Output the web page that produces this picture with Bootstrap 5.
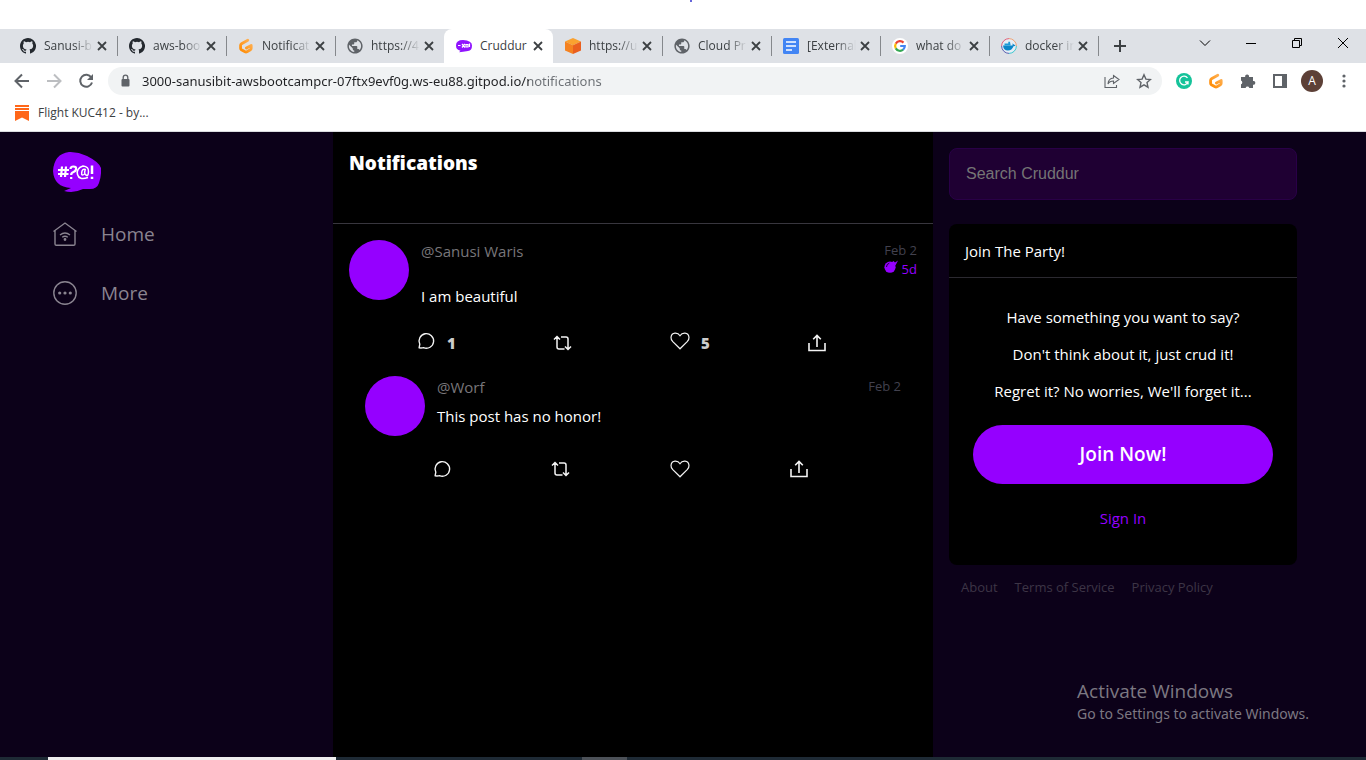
<!DOCTYPE html>
<html lang="en">
<head>
<meta charset="utf-8">
<meta name="viewport" content="width=device-width, initial-scale=1">
<title>Cruddur</title>
<link href="https://cdn.jsdelivr.net/npm/bootstrap@5.3.0/dist/css/bootstrap.min.css" rel="stylesheet">
<style>
  :root { --purple: #9500ff; --night: #0c0119; }
  body { font-family: "Open Sans", "Noto Sans", sans-serif; font-size: 15px; line-height: 24px; background: #fff; color: #fff; overflow-x: hidden; }
  svg { display: block; flex: none; }
  button { background: none; border: 0; padding: 0; color: inherit; }

  /* browser window */
  .page-top { height: 29px; }
  .speck { width: 2px; height: 2px; background: #33c; border-radius: 1px; }
  .tab-strip { background: #dee1e6; height: 34px; padding-left: 8px; color: #3c4043; }
  .tab-item { flex: 0 1 109px; min-width: 0; position: relative; padding: 0 10px 0 12px; font-size: 12px; line-height: 34px; }
  .tab-item::after { content: ""; position: absolute; right: -1px; top: 7px; height: 20px; width: 1px; background: #85888c; }
  .tab-item.current::after, .tab-item.before-current::after { display: none; }
  .tab-item.current { background: #fff; border-radius: 8px 8px 0 0; }
  .tab-item a { color: #3c4043; text-decoration: none; }
  .tab-title { width: 50px; white-space: nowrap; -webkit-mask-image: linear-gradient(90deg, #000 60%, transparent 98%); mask-image: linear-gradient(90deg, #000 60%, transparent 98%); }
  .current .tab-title { -webkit-mask-image: none; mask-image: none; }
  .win-btn { width: 46px; height: 28px; color: #000; }
  .toolbar { height: 36px; padding: 0 14px; color: #5f6368; }
  .omnibox { background: #f1f3f4; border-radius: 14px; height: 28px; padding: 0 10px 0 11px; margin: 0 14px; }
  .omnibox input { border: 0; outline: 0; font-family: "Noto Sans", sans-serif; font-size: 13px; height: 28px; padding: 0; min-width: 0; margin: 0 10px; color: transparent; background: linear-gradient(90deg, #202124 387px, #6b6f74 387px); -webkit-background-clip: text; background-clip: text; }
  .bookmarks { height: 33px; padding: 0 14px 4px; border-bottom: 1px solid #dadce0; font-size: 12px; }
  .bookmarks a { color: #3c4043; text-decoration: none; }
  .avatar-letter { width: 22px; height: 22px; margin: 0 -3px; border-radius: 50%; background: #5d4037; color: #fff; font-size: 12px; line-height: 22px; }

  /* app */
  .app { background: var(--night); }
  .side { flex: 1 1 0; min-width: 0; padding: 20px 16px 0 53px; }
  .side a { color: #8a8490; text-decoration: none; font-size: 19px; line-height: 24px; }
  .side-links { margin-top: 30px; gap: 35px; }
  .side-links a { gap: 24px; }
  .feed { flex: 0 1 600px; background: #000; min-width: 0; }
  .feed-head { height: 92px; padding: 19px 16px; border-bottom: 1px solid #38363e; }
  .feed-head h1 { font-size: 19px; line-height: 24px; font-weight: 800; margin: 0; }
  .post { padding: 16px 16px 0; }
  .reply { padding: 20px 32px 0; }
  .face { width: 60px; height: 60px; border-radius: 50%; background: var(--purple); flex: none; }
  .who { color: #78767a; line-height: 22px; margin-bottom: 6px; }
  .post .who { margin-bottom: 22px; }
  .when { font-size: 13px; line-height: 20px; color: #42414e; }
  .when .left { color: var(--purple); line-height: 18px; }
  .acts { margin: 22px 90px 0 67px; color: #e8e8e8; height: 26px; }
  .reply .acts { margin: 20px 92px 0 67px; }
  .acts button { min-width: 20px; font-weight: 800; font-size: 15px; gap: 11px; color: #ccc; }
  .acts svg { color: #f4f4f4; }
  .raise svg { margin-bottom: 4px; }
  .rail { flex: 0 1 433px; padding: 16px; min-width: 0; }
  .rail-inner { max-width: 348px; }
  .find { background: #1f0033; border: 1px solid #290047; border-radius: 8px; height: 52px; padding: 0 16px; color: #fff; font: 16px "Liberation Sans", sans-serif; }
  .find:focus { background: #1f0033; color: #fff; border-color: var(--purple); box-shadow: none; }
  .find::placeholder { color: #757575; }
  .party { background: #000; border-radius: 8px; margin-top: 24px; }
  .party h2 { font-size: 15px; line-height: 21px; font-weight: 400; margin: 0; padding: 17px 16px 15px; border-bottom: 1px solid #2b2930; }
  .party-body { padding: 27px 24px 35px; }
  .party p { margin: 0 0 13px; }
  .btn-join { background: var(--purple); color: #fff; border-radius: 30px; height: 59px; font-size: 19px; font-weight: 600; margin: 9px 0 22px; }
  .btn-join:hover { background: #a62bff; color: #fff; }
  .party a { color: var(--purple); text-decoration: none; }
  .legal { padding: 12px 12px 0; gap: 17px; font-size: 13px; line-height: 20px; }
  .legal a { color: #3d3546; text-decoration: none; }
  .watermark { position: absolute; right: 57px; bottom: 32px; color: #7c7882; line-height: 22px; font-family: "Noto Sans", sans-serif; font-size: 14px; }
  .watermark strong { font-family: "Open Sans", sans-serif; font-weight: 400; font-size: 19px; line-height: 24px; display: block; }
  .taskbar { height: 3px; background: #1e2a35; padding-left: 48px; }
  .task-search { width: 288px; background: #f0eff0; }
  .task-open { width: 45px; background: #4c5158; margin-left: 246px; }
</style>
</head>
<body class="min-vh-100 d-flex flex-column">

<svg width="0" height="0" class="position-absolute" aria-hidden="true">
  <defs>
    <symbol id="x" viewBox="0 0 10 10"><path d="M1 1l8 8M9 1L1 9" stroke="#3c4043" stroke-width="1.8" fill="none"/></symbol>
    <symbol id="github" viewBox="0 0 16 16"><path fill="#24292f" d="M8 0C3.58 0 0 3.58 0 8c0 3.54 2.29 6.53 5.47 7.59.4.07.55-.17.55-.38 0-.19-.01-.82-.01-1.49-2.01.37-2.53-.49-2.69-.94-.09-.23-.48-.94-.82-1.13-.28-.15-.68-.52-.01-.53.63-.01 1.08.58 1.23.82.72 1.21 1.87.87 2.33.66.07-.52.28-.87.51-1.07-1.78-.2-3.64-.89-3.64-3.95 0-.87.31-1.59.82-2.15-.08-.2-.36-1.02.08-2.12 0 0 .67-.21 2.2.82a7.6 7.6 0 0 1 4 0c1.53-1.04 2.2-.82 2.2-.82.44 1.1.16 1.92.08 2.12.51.56.82 1.27.82 2.15 0 3.07-1.87 3.75-3.65 3.95.29.25.54.73.54 1.48 0 1.07-.01 1.93-.01 2.2 0 .21.15.46.55.38A8 8 0 0 0 8 0z"/></symbol>
    <linearGradient id="gp" x1="0" y1="1" x2="1" y2="0"><stop offset="0" stop-color="#ff8a00"/><stop offset="1" stop-color="#ffb45b"/></linearGradient>
    <symbol id="gitpod" viewBox="0 0 16 16"><path d="M9.800 2.200L3.500 5.700q-.9.500-.9 1.500v3.100q0 .9.800 1.400l3.700 2.100q.9.500 1.800 0l3.500-2.100q.8-.5.8-1.400V7.500L8.400 10" fill="none" stroke="url(#gp)" stroke-width="2.800" stroke-linejoin="round" stroke-linecap="round"/></symbol>
    <symbol id="globe" viewBox="1.500 1.500 21 21"><path fill="#5f6368" d="M12 2C6.480 2 2 6.480 2 12s4.480 10 10 10 10-4.480 10-10S17.520 2 12 2zm-1 17.930c-3.950-.49-7-3.850-7-7.930 0-.62.080-1.210.210-1.790L9 15v1c0 1.100.9 2 2 2v1.930zm6.900-2.540c-.26-.81-1-1.390-1.900-1.390h-1v-3c0-.55-.45-1-1-1H8v-2h2c.55 0 1-.45 1-1V7h2c1.100 0 2-.9 2-2v-.41c2.930 1.190 5 4.060 5 7.410 0 2.080-.8 3.970-2.100 5.390z"/></symbol>
    <symbol id="bubble" viewBox="0 0 24 24"><path d="M3.500 20.500l.9-4.500A9 9 0 1 1 9 20.300q-2.500.6-5.500.2z" fill="none" stroke="currentColor" stroke-width="1.700" stroke-linejoin="round" transform="translate(-1 -1) scale(1.080)"/></symbol>
    <symbol id="repost" viewBox="0 0 20 18"><path d="M1 5.500L4 2.500l3 3M4 3v10q0 2 2 2h5.500M18 12.500l-3 3-3-3M15 15V5q0-2-2-2H8" fill="none" stroke="currentColor" stroke-width="1.500"/></symbol>
    <symbol id="heart" viewBox="0 0 20 18"><path d="M10 16.800L2.800 9.700Q.8 7.500 1 5.300 1.500 1.500 5 1.200q3.300-.2 5 2.500 1.700-2.700 5-2.500 3.500.3 4 4.100.2 2.200-1.800 4.400z" fill="none" stroke="currentColor" stroke-width="1.200"/></symbol>
    <symbol id="share" viewBox="0 0 18 18"><path d="M1 9v7.500h16V9M9 13V2M5.200 5.300L9 1.500l3.800 3.800" fill="none" stroke="currentColor" stroke-width="1.600"/></symbol>
  </defs>
</svg>

<header class="bg-white">
  <div class="page-top d-flex justify-content-center"><span class="speck ms-3"></span></div>
  <nav class="tab-strip d-flex" aria-label="Tabs">
    <div class="tab-item d-flex align-items-center justify-content-between"><a href="#" class="d-flex align-items-center gap-2"><svg width="16" height="16"><use href="#github"/></svg><span class="tab-title">Sanusi-b</span></a><button aria-label="Close tab"><svg width="10" height="10"><use href="#x"/></svg></button></div>
    <div class="tab-item d-flex align-items-center justify-content-between"><a href="#" class="d-flex align-items-center gap-2"><svg width="16" height="16"><use href="#github"/></svg><span class="tab-title">aws-boo</span></a><button aria-label="Close tab"><svg width="10" height="10"><use href="#x"/></svg></button></div>
    <div class="tab-item d-flex align-items-center justify-content-between"><a href="#" class="d-flex align-items-center gap-2"><svg width="16" height="16"><use href="#gitpod"/></svg><span class="tab-title">Notificat</span></a><button aria-label="Close tab"><svg width="10" height="10"><use href="#x"/></svg></button></div>
    <div class="tab-item before-current d-flex align-items-center justify-content-between"><a href="#" class="d-flex align-items-center gap-2"><svg width="16" height="16"><use href="#globe"/></svg><span class="tab-title">https://4</span></a><button aria-label="Close tab"><svg width="10" height="10"><use href="#x"/></svg></button></div>
    <div class="tab-item current d-flex align-items-center justify-content-between"><a href="#" class="d-flex align-items-center gap-2"><svg width="16" height="16" viewBox="0 0 16 16"><path d="M0 7.500Q0 2 7 2q9 .5 9 5.500 0 5-4 5.500l-5 .8-4 .4 1.500-1.500Q0 12 0 7.500z" fill="#9013fe"/><path d="M2 7.500h2.500M6 6l3 3.500M9 5.800L6 9.500M10 6.500h2v2.500h-2zM13.500 5.500v3.500" stroke="#fff" stroke-width="1.200" fill="none"/></svg><span class="tab-title">Cruddur</span></a><button aria-label="Close tab"><svg width="10" height="10"><use href="#x"/></svg></button></div>
    <div class="tab-item d-flex align-items-center justify-content-between"><a href="#" class="d-flex align-items-center gap-2"><svg width="16" height="16" viewBox="0 0 16 16"><path d="M8 0l8 3.500L8 7.200 0 3.500z" fill="#faa12f"/><path d="M0 3.500l8 3.700V16l-8-3.500z" fill="#f58220"/><path d="M16 3.500L8 7.200V16l8-3.500z" fill="#ea5f1e"/></svg><span class="tab-title">https://u</span></a><button aria-label="Close tab"><svg width="10" height="10"><use href="#x"/></svg></button></div>
    <div class="tab-item d-flex align-items-center justify-content-between"><a href="#" class="d-flex align-items-center gap-2"><svg width="16" height="16"><use href="#globe"/></svg><span class="tab-title">Cloud Pr</span></a><button aria-label="Close tab"><svg width="10" height="10"><use href="#x"/></svg></button></div>
    <div class="tab-item d-flex align-items-center justify-content-between"><a href="#" class="d-flex align-items-center gap-2"><svg width="16" height="16" viewBox="0 0 16 16"><rect width="16" height="16" rx="1.500" fill="#4285f4"/><path d="M3 4h10M3 8h10M3 12h6" stroke="#fff" stroke-width="1.700"/></svg><span class="tab-title">[External</span></a><button aria-label="Close tab"><svg width="10" height="10"><use href="#x"/></svg></button></div>
    <div class="tab-item d-flex align-items-center justify-content-between"><a href="#" class="d-flex align-items-center gap-2"><svg width="16" height="16" viewBox="0 0 16 16"><circle cx="8" cy="8" r="8" fill="#fff"/><g fill="none" stroke-width="2.200"><path d="M11.500 4.600A4.900 4.900 0 0 0 3.800 5.600" stroke="#ea4335"/><path d="M3.800 5.600a4.900 4.900 0 0 0 0 4.800" stroke="#fbbc05"/><path d="M3.800 10.400a4.900 4.900 0 0 0 7.300 1.300" stroke="#34a853"/><path d="M11.100 11.700Q12.800 10.200 12.800 8H8.200" stroke="#4285f4"/></g></svg><span class="tab-title">what do</span></a><button aria-label="Close tab"><svg width="10" height="10"><use href="#x"/></svg></button></div>
    <div class="tab-item d-flex align-items-center justify-content-between"><a href="#" class="d-flex align-items-center gap-2"><svg width="16" height="16" viewBox="0 0 16 16"><circle cx="8" cy="8" r="7.400" fill="#e7eef5"/><g fill="none" stroke-width="1"><path d="M.6 8A7.400 7.400 0 0 1 8 .6" stroke="#e0607a"/><path d="M8 .6A7.400 7.400 0 0 1 15.400 8" stroke="#f0a070"/><path d="M15.400 8A7.400 7.400 0 0 1 8 15.400" stroke="#3cc8d0"/><path d="M8 15.400A7.400 7.400 0 0 1 .6 8" stroke="#5a60b0"/></g><path d="M2 7.500h9.500q.4-1.200-.2-2 1.300.2 1.700 1.200l1.500.2q-.5 1.400-2 1.400Q11 12.500 6.800 12.500 2.500 12.500 2 7.500z" fill="#0b86c8"/><path d="M3.500 5.500h6v2h-6zM7.300 3.700h1.800v2H7.300z" fill="#1c9ad8"/></svg><span class="tab-title">docker in</span></a><button aria-label="Close tab"><svg width="10" height="10"><use href="#x"/></svg></button></div>
    <button class="px-3" aria-label="New tab"><svg width="12" height="12" viewBox="0 0 12 12"><path d="M6 0v12M0 6h12" stroke="#3c4043" stroke-width="2"/></svg></button>
    <div class="d-flex ms-auto">
      <button class="win-btn d-flex justify-content-center align-items-center" aria-label="Search tabs"><svg width="12" height="8" viewBox="0 0 12 8"><path d="M1 1.500l5 5 5-5" fill="none" stroke="currentColor"/></svg></button>
      <button class="win-btn d-flex justify-content-center align-items-center" aria-label="Minimise"><svg width="10" height="1"><rect width="10" height="1"/></svg></button>
      <button class="win-btn d-flex justify-content-center align-items-center" aria-label="Restore"><svg width="10" height="10" viewBox="0 0 10 10"><path d="M.5 2.500h7v7h-7zM2.500 2.500v-2h7v7h-2" fill="none" stroke="currentColor"/></svg></button>
      <button class="win-btn d-flex justify-content-center align-items-center" aria-label="Close"><svg width="10" height="10" viewBox="0 0 10 10"><path d="M0 0l10 10M10 0L0 10" stroke="currentColor"/></svg></button>
    </div>
  </nav>
  <div class="toolbar d-flex align-items-center">
    <button class="me-3" aria-label="Back"><svg width="16" height="16" viewBox="0 0 16 16"><path d="M15 8H2M8 1.500L1.500 8 8 14.500" fill="none" stroke="#5f6368" stroke-width="2"/></svg></button>
    <button class="me-3" aria-label="Forward"><svg width="16" height="16" viewBox="0 0 16 16"><path d="M1 8h13M8 1.500L14.500 8 8 14.500" fill="none" stroke="#bcbec1" stroke-width="2"/></svg></button>
    <button aria-label="Reload"><svg width="16" height="16" viewBox="0 0 16 16"><path d="M13.300 4.500A6 6 0 1 0 14 9.500" fill="none" stroke="#5f6368" stroke-width="2"/><path d="M15 1v6H9z" fill="#5f6368"/></svg></button>
    <form class="omnibox d-flex align-items-center flex-grow-1">
      <svg width="13" height="14" viewBox="0 0 13 14"><rect x="2.500" y="5" width="8" height="7.500" rx="1" fill="#5f6368"/><path d="M4.200 6V3.500a2.300 2.300 0 0 1 4.600 0V6" fill="none" stroke="#5f6368" stroke-width="1.300"/></svg>
      <label class="visually-hidden" for="url">Address</label>
      <input id="url" type="text" class="flex-grow-1" value="3000-sanusibit-awsbootcampcr-07ftx9evf0g.ws-eu88.gitpod.io/notifications">
      <button type="button" class="me-3" aria-label="Share page"><svg width="16" height="16" viewBox="0 0 16 16"><path d="M1 4v10.500h11.500V12M9.500 2.500l5.500 4-5.500 4V8Q5.500 8 4 11q.3-5.500 5.500-6z" fill="none" stroke="#5f6368" stroke-width="1.100"/></svg></button>
      <button type="button" aria-label="Bookmark"><svg width="16" height="16" viewBox="0 0 16 16"><path d="M8 1.800l1.900 4.300 4.600.4L11 9.600l1 4.600-4-2.400-4 2.400 1-4.600-3.500-3.100 4.600-.4z" fill="none" stroke="#5f6368" stroke-width="1.400"/></svg></button>
    </form>
    <div class="d-flex align-items-center gap-3">
      <button aria-label="Grammarly"><svg width="16" height="16" viewBox="0 0 16 16"><circle cx="8" cy="8" r="8" fill="#15c39a"/><path d="M11.500 5A4.300 4.300 0 1 0 12 9H9M12 9v2.500" fill="none" stroke="#fff" stroke-width="1.300"/></svg></button>
      <button aria-label="Gitpod"><svg width="16" height="16"><use href="#gitpod"/></svg></button>
      <button aria-label="Extensions"><svg width="16" height="16" viewBox="0 0 16 16"><path d="M1 4h4.200a2 2 0 1 1 3.800 0h4v4a1.900 1.900 0 1 1 0 3.700V15H9.300a1.900 1.900 0 0 0-3.700 0H1v-3.800a1.900 1.900 0 0 0 0-3.600z" fill="#5f6368"/></svg></button>
      <button aria-label="Side panel"><svg width="16" height="16" viewBox="0 0 16 16"><path d="M2 2h12v12H2z" fill="none" stroke="#5f6368" stroke-width="2"/><path d="M10 2h4v12h-4z" fill="#5f6368"/></svg></button>
      <button class="avatar-letter" aria-label="Profile">A</button>
      <button aria-label="Menu"><svg width="16" height="16" viewBox="0 0 16 16" fill="#5f6368"><circle cx="8" cy="3" r="1.600"/><circle cx="8" cy="8" r="1.600"/><circle cx="8" cy="13" r="1.600"/></svg></button>
    </div>
  </div>
  <div class="bookmarks d-flex align-items-center"><a href="#" class="d-flex align-items-center gap-2"><svg width="16" height="16" viewBox="0 0 16 16"><path d="M1 0h14v2H1zM1 3h14v2H1zM1 6h14v10l-7-3.500L1 16z" fill="#ff6719"/></svg>Flight KUC412 - by...</a></div>
</header>

<div class="app d-flex flex-grow-1 position-relative">
  <nav class="side">
    <a href="#" class="d-inline-block align-top" aria-label="Cruddur"><svg width="48" height="40" viewBox="0 0 48 40"><path d="M0 19Q1 2 16 0q9-.2 18 4 12 6 14 12 .5 8-2 15-2 6-9 6h-7q-9 4.500-19 2l7-3Q1 35 0 19z" fill="#9500ff"/><g fill="none" stroke="#fff" stroke-width="2.200"><path d="M9 14.500L8 25M13 14.500L12 25M5 18h11M5 22h10.500"/><path d="M17.500 17q0-2.500 3-2.500t2.500 2.500q0 2-2.500 3t-2.300 3M18.200 25v2"/><path d="M35 25.500q-9 3-10.500-3T30 14q6 .5 5.500 6t-3 2.500q-1.500-.5-.3-5-3-1-3.500 3t3 1.500" stroke-width="1.500"/><path d="M39 13.500V22M39 24.800v2.200" stroke-width="2.500"/></g></svg></a>
    <div class="side-links d-flex flex-column">
      <a href="#" class="d-flex align-items-center"><svg width="24" height="24" viewBox="0 0 24 24" fill="none" stroke="currentColor" stroke-width="1.400"><path d="M.5 9.500L12 1l11.500 8.500M2 8.500V22q0 1.300 1.300 1.300h17.400Q22 23.300 22 22V8.500M7 13q5-4 10 0M9.200 15.200q2.800-2 5.600 0"/><circle cx="12" cy="17.500" r=".7" fill="currentColor"/></svg>Home</a>
      <a href="#" class="d-flex align-items-center"><svg width="24" height="24" viewBox="0 0 24 24"><circle cx="12" cy="12" r="11.200" fill="none" stroke="currentColor" stroke-width="1.400"/><g fill="currentColor"><circle cx="6.700" cy="12" r="1.600"/><circle cx="12" cy="12" r="1.600"/><circle cx="17.300" cy="12" r="1.600"/></g></svg>More</a>
    </div>
  </nav>

  <main class="feed">
    <div class="feed-head"><h1>Notifications</h1></div>
    <article class="post">
      <div class="d-flex">
        <div class="face"></div>
        <div class="ms-2 ps-1 flex-grow-1"><div class="who">@Sanusi Waris</div><div class="mb-n2">I am beautiful</div></div>
        <div class="when text-end"><div>Feb 2</div><div class="left d-flex justify-content-end gap-1"><svg width="14" height="13" viewBox="0 0 14 13"><circle cx="6" cy="7.200" r="5.600" fill="#9500ff"/><path d="M7.500 2.500l2-1.500 1.500 1.500 3-2-1.500 3-1.200 2z" fill="#9500ff"/><path d="M2.500 7q0-3 2.800-3.800" stroke="#000" fill="none" stroke-width=".8"/></svg>5d</div></div>
      </div>
      <div class="acts d-flex align-items-center justify-content-between">
        <button class="raise d-flex align-items-center" aria-label="Replies"><svg width="20" height="18"><use href="#bubble"/></svg>1</button>
        <button aria-label="Repost"><svg width="20" height="18"><use href="#repost"/></svg></button>
        <button class="raise d-flex align-items-center" aria-label="Likes"><svg width="20" height="18"><use href="#heart"/></svg>5</button>
        <button aria-label="Share"><svg width="20" height="18"><use href="#share"/></svg></button>
      </div>
    </article>
    <article class="reply">
      <div class="d-flex">
        <div class="face"></div>
        <div class="ms-2 ps-1 flex-grow-1"><div class="who">@Worf</div><div>This post has no honor!</div></div>
        <div class="when">Feb 2</div>
      </div>
      <div class="acts d-flex align-items-center justify-content-between">
        <button aria-label="Reply"><svg width="20" height="18"><use href="#bubble"/></svg></button>
        <button aria-label="Repost"><svg width="20" height="18"><use href="#repost"/></svg></button>
        <button aria-label="Like"><svg width="20" height="18"><use href="#heart"/></svg></button>
        <button aria-label="Share"><svg width="20" height="18"><use href="#share"/></svg></button>
      </div>
    </article>
  </main>

  <aside class="rail">
    <div class="rail-inner">
      <label class="visually-hidden" for="search">Search</label>
      <input id="search" type="text" class="find form-control" placeholder="Search Cruddur">
      <section class="party">
        <h2>Join The Party!</h2>
        <div class="party-body text-center">
          <p>Have something you want to say?</p>
          <p>Don't think about it, just crud it!</p>
          <p>Regret it? No worries, We'll forget it...</p>
          <button class="btn btn-join w-100">Join Now!</button>
          <div><a href="#">Sign In</a></div>
        </div>
      </section>
      <footer class="legal d-flex"><a href="#">About</a><a href="#">Terms of Service</a><a href="#">Privacy Policy</a></footer>
    </div>
  </aside>
  <div class="watermark"><strong>Activate Windows</strong>Go to Settings to activate Windows.</div>
</div>
<div class="taskbar d-flex"><div class="task-search"></div><div class="task-open"></div></div>

<script src="https://cdn.jsdelivr.net/npm/bootstrap@5.3.0/dist/js/bootstrap.bundle.min.js"></script>
</body>
</html>
